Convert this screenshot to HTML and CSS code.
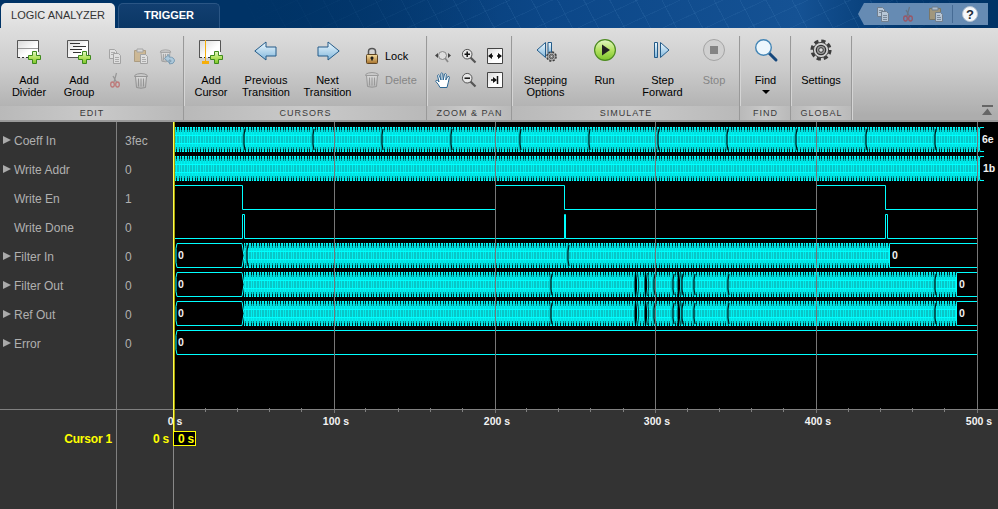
FILE: index.html
```html
<!DOCTYPE html>
<html lang="en">
<head>
    <meta charset="UTF-8">
    <title>Logic Analyzer</title>
    <link rel="stylesheet" href="styles.css">
</head>
<body>
    <svg class="defs" width="0" height="0">
        <defs>
            <linearGradient id="paper" x2="1" y2="1"><stop stop-color="#d8d8d8"/><stop offset=".6" stop-color="#fff"/></linearGradient>
            <linearGradient id="blue" x2="0" y2="1"><stop stop-color="#f0faff"/><stop offset="1" stop-color="#7fb6dc"/></linearGradient>
            <linearGradient id="green" x2="0" y2="1"><stop stop-color="#e4f7c8"/><stop offset=".5" stop-color="#b4e261"/><stop offset="1" stop-color="#7cc52a"/></linearGradient>
            <linearGradient id="gold" x2="0" y2="1"><stop stop-color="#f7dfa0"/><stop offset="1" stop-color="#a7722c"/></linearGradient>
            <linearGradient id="grey" x2="0" y2="1"><stop stop-color="#eee"/><stop offset="1" stop-color="#aaa"/></linearGradient>
            <symbol id="plus" viewBox="0 0 13 13"><path d="M4.5.5h4v4h4v4h-4v4h-4v-4h-4v-4h4z" fill="url(#green)" stroke="#3f8a1c"/></symbol>
            <symbol id="copy" viewBox="0 0 16 16">
                <path d="M2.500 1.500h5l2 2v7h-7z" fill="#eee" stroke="#777"/><path d="M4 4.500h4M4 6.500h4" stroke="#888"/>
                <path d="M6.500 5.500h5l2 2v8h-7z" fill="#eee" stroke="#777"/><path d="M8 9.500h4M8 11.500h4M8 13.500h4" stroke="#888"/>
            </symbol>
            <symbol id="cut" viewBox="0 0 16 16">
                <path d="M9.500 1L7 10M6 4l4 7" stroke="#666" fill="none" stroke-width="1.200"/>
                <ellipse cx="5.500" cy="12.500" rx="1.800" ry="2.500" fill="none" stroke="#b33" stroke-width="1.300"/><ellipse cx="10.500" cy="12.500" rx="1.800" ry="2.500" fill="none" stroke="#b33" stroke-width="1.300"/>
            </symbol>
            <symbol id="paste" viewBox="0 0 16 16">
                <path d="M1.500 2.500h11v11h-11z" fill="#c9a05a" stroke="#8a6a35"/><path d="M4 1h6v3H4z" fill="#ddd" stroke="#777"/>
                <path d="M7.500 6.500h5l2 2v7h-7z" fill="#eee" stroke="#777"/><path d="M9 9.500h3M9 11.500h4M9 13.500h4" stroke="#888"/>
            </symbol>
            <symbol id="trash" viewBox="0 0 16 17">
                <path d="M2.500 4.500h11l-1 11q-4.500 1.500-9 0z" fill="url(#grey)" stroke="#666"/>
                <path d="M1.500 4.500q0-2 3-2.500 3.500-1 7 0 3 .5 3 2.500z" fill="#ccc" stroke="#666"/>
                <path d="M5.500 6.500v8M8 6.500v8M10.500 6.500v8" stroke="#666"/>
            </symbol>
            <symbol id="arrow" viewBox="0 0 23 20"><path d="M.8 10L12 1v5h10v9H12v4z" fill="url(#blue)" stroke="#245b88"/></symbol>
            <symbol id="lens" viewBox="0 0 16 16"><path d="M9.500 9.500l5 5" stroke="#555" stroke-width="2.200"/><circle cx="6.200" cy="6.200" r="4.800" fill="#e8e8e8" stroke="#555"/></symbol>
            <symbol id="gear" viewBox="0 0 22 22">
                <circle cx="11" cy="11" r="9" fill="none" stroke="#3c3c3c" stroke-width="3.200" stroke-dasharray="4.200 2.869"/>
                <circle cx="11" cy="11" r="7.600" fill="#d0d0d0" stroke="#444"/><circle cx="11" cy="11" r="4.700" fill="#999" stroke="#333" stroke-width="1.300"/>
                <circle cx="11" cy="11" r="2.300" fill="#ddd" stroke="#333"/>
            </symbol>
            <!-- three transitions every 8px -->
            <pattern id="bus" width="8" height="29" patternUnits="userSpaceOnUse" x="174" y="127">
                <g shape-rendering="crispEdges">
                    <rect width="8" height="25" fill="#00e2e2"/>
                    <rect y="9" width="8" height="7" fill="#08c6c8"/>
                    <path d="M2 3h1v19h-1zM5 3h1v19h-1zM7 3h1v19h-1z" fill="#00f0f0"/>
                    <path d="M0 0h8v1H0zM0 8h8v1H0zM0 16h8v1H0zM0 24h8v1H0z" fill="#00ffff"/>
                    <path d="M2 0h1v3h-1zM5 0h1v3h-1zM7 0h1v3h-1zM2 22h1v3h-1zM5 22h1v3h-1zM7 22h1v3h-1z" fill="#002a2a"/>
                    <path d="M2 3h1v2h-1zM5 3h1v2h-1zM7 3h1v2h-1zM2 20h1v2h-1zM5 20h1v2h-1zM7 20h1v2h-1z" fill="#008a8a"/>
                </g>
            </pattern>
            <symbol id="gap" viewBox="0 0 5 25" overflow="visible"><path d="M2 1L1 8v9l1 7" fill="none" stroke="#0aa"/><path d="M3 2L2 8v9l1 6" fill="none" stroke="#001818" stroke-width="1.200"/></symbol>
            <symbol id="wide" viewBox="0 0 5 25" overflow="visible"><path d="M1 0h1l1 8v9l-1 8H1l-.5-8V8z" fill="#000"/><path d="M3.500 1l1 7v9l-1 7" fill="none" stroke="#055"/></symbol>
        </defs>
    </svg>

    <header class="topbar">
        <div class="tab active">LOGIC ANALYZER</div>
        <div class="tab">TRIGGER</div>
        <svg class="quick" width="140" height="22" viewBox="0 0 140 22">
            <path d="M0 11L6 0h124v22H6z" fill="#668bb3"/>
            <g opacity=".6"><use href="#copy" x="17" y="3" width="16" height="16"/><use href="#cut" x="42" y="3" width="16" height="16"/><use href="#paste" x="70" y="3" width="16" height="16"/></g>
            <path d="M94.500 2v18" stroke="#466b94"/>
            <circle cx="112" cy="11" r="7.500" fill="#f6f8fa" stroke="#b5c2d0"/>
            <text x="112" y="15.500" class="help">?</text>
        </svg>
    </header>

    <nav class="ribbon">
        <section class="group edit">
            <div class="tools">
                <button class="tool"><svg width="26" height="26"><path d="M1.500 2.500h21v17h-21z" fill="url(#paper)"/><path d="M1.500 20V2.500h21V14" fill="none" stroke="#555"/><path d="M2 10.500h20" stroke="#999"/><path d="M2 19.500h12" stroke="#333" stroke-dasharray="2 2"/><use href="#plus" x="12" y="13" width="13" height="13"/></svg><span>Add<br>Divider</span></button>
                <button class="tool"><svg width="26" height="26"><path d="M1.500 2.500h21v17h-21z" fill="url(#paper)" stroke="#555"/><path d="M4 5.500h10M7 8.500h13M4 11.500h12M7 14.500h8" stroke="#333"/><use href="#plus" x="12" y="13" width="13" height="13"/></svg><span>Add<br>Group</span></button>
                <div class="icons three faded">
                    <svg width="16" height="17"><use href="#copy" width="16" height="16"/></svg>
                    <svg width="16" height="17"><use href="#paste" width="16" height="16"/></svg>
                    <svg width="16" height="17"><use href="#trash" width="13" height="15"/><path d="M5.500 10.500l4.500-4v2.500q5.500 0 5.500 4-.5 3-5 3v-2q2.500-.5 1.500-1.500-1-.7-2-.5v2.500z" fill="#8cc4e8" stroke="#2a6b98"/></svg>
                    <svg width="16" height="17"><use href="#cut" width="16" height="16"/></svg>
                    <svg width="16" height="17"><use href="#trash" width="16" height="17"/></svg>
                </div>
            </div>
            <h2>EDIT</h2>
        </section>
        <section class="group cursors">
            <div class="tools">
                <button class="tool w54"><svg width="26" height="26"><path d="M1.500 2.500h21v17h-21z" fill="url(#paper)"/><path d="M1.500 20V2.500h21V14" fill="none" stroke="#555"/><path d="M2 19.500h12" stroke="#333" stroke-dasharray="2 2"/><path d="M7.500 2v21" stroke="#f5ae0a"/><path d="M4 23h7v3H4z" fill="#f5ae0a"/><use href="#plus" x="12" y="13" width="13" height="13"/></svg><span>Add<br>Cursor</span></button>
                <button class="tool w56"><svg width="26" height="26"><use href="#arrow" x="1" y="3" width="23" height="20"/></svg><span>Previous<br>Transition</span></button>
                <button class="tool w67"><svg width="26" height="26"><use href="#arrow" width="23" height="20" transform="translate(25 3) scale(-1 1)"/></svg><span>Next<br>Transition</span></button>
                <div class="lines">
                    <div><svg width="16" height="17"><path d="M4.500 9V4.500q0-3 3.500-3t3.500 3V9" fill="none" stroke="#555" stroke-width="1.500"/><rect x="2.500" y="7.500" width="11" height="9" rx="1" fill="url(#gold)" stroke="#5e4422"/><path d="M8 9.500v4M6.500 11h3" stroke="#111" stroke-width="1.500"/></svg>Lock</div>
                    <div class="off"><svg width="16" height="17"><use href="#trash" width="16" height="17"/></svg>Delete</div>
                </div>
            </div>
            <h2>CURSORS</h2>
        </section>
        <section class="group zoom">
            <div class="tools">
                <div class="icons zoomicons">
                    <svg width="16" height="17"><circle cx="7.500" cy="7.500" r="4" fill="#ddd" stroke="#888"/><path d="M10 10l3 4" stroke="#888" stroke-width="1.700"/><path d="M3 5v5L0 7.500zM13 5v5l3-2.500z" fill="#444"/></svg>
                    <svg width="16" height="17"><use href="#lens" width="16" height="16"/><path d="M3.500 6.200h5.500M6.200 3.500V9" stroke="#111" stroke-width="1.500"/></svg>
                    <svg width="17" height="17"><path d="M.5.5h15v15H.5z" fill="url(#paper)" stroke="#444"/><path d="M2 8h4M10 8h4" stroke="#111" stroke-width="1.500"/><path d="M5 5v6L1 8zM11 5v6l4-3z" fill="#111"/></svg>
                    <svg width="16" height="17"><path d="M5 15.500Q3.500 12 .8 9.500q0-1.500 1.500-1.200L4 10 2.500 3.500q.8-1.500 1.800 0L6 8 5.800 1.500q1-1.300 1.900 0L8.200 8l1.300-6q1.300-1 1.800.3L10.800 8l2-3.500q1.500-.6 1.600.7Q13.500 10 12 15.500z" fill="#fff" stroke="#2d6793"/></svg>
                    <svg width="16" height="17"><use href="#lens" width="16" height="16"/><path d="M3.500 6.200h5.500" stroke="#111" stroke-width="1.500"/></svg>
                    <svg width="17" height="17"><path d="M.5.5h15v15H.5z" fill="url(#paper)" stroke="#444"/><path d="M4 8h3M10.500 4v8" stroke="#111" stroke-width="1.500"/><path d="M6 5v6l4-3z" fill="#111"/></svg>
                </div>
            </div>
            <h2>ZOOM &amp; PAN</h2>
        </section>
        <section class="group simulate">
            <div class="tools">
                <button class="tool w67"><svg width="26" height="26"><path d="M12.500 4.500v15L4 12z" fill="url(#blue)" stroke="#245b88"/><path d="M15 4.500h3.500v12H15z" fill="url(#blue)" stroke="#245b88"/><use href="#gear" x="13" y="13" width="11" height="11"/></svg><span>Stepping<br>Options</span></button>
                <button class="tool w51"><svg width="26" height="26"><circle cx="13" cy="12" r="10.400" fill="url(#green)" stroke="#4c8a20" stroke-width="1.200"/><path d="M10 6.500v11l8-5.500z" fill="#222"/></svg><span>Run</span></button>
                <button class="tool w65"><svg width="26" height="26"><path d="M4.500 4.500h3v15h-3zM10.500 4.500v15L19 12z" fill="url(#blue)" stroke="#245b88"/></svg><span>Step<br>Forward</span></button>
                <button class="tool w38 off"><svg width="26" height="26"><circle cx="13" cy="12" r="10.500" fill="#d0d0d0" stroke="#a4a4a4"/><path d="M9 8h8v8H9z" fill="#848484"/></svg><span>Stop</span></button>
            </div>
            <h2>SIMULATE</h2>
        </section>
        <section class="group find">
            <div class="tools">
                <button class="tool"><svg width="26" height="26"><path d="M16 15l7 7" stroke="#15477c" stroke-width="3" stroke-linecap="round"/><circle cx="10.500" cy="9.500" r="7.800" fill="#ecf6fc" stroke="#4385b5" stroke-width="1.400"/></svg><span>Find<i class="caret"></i></span></button>
            </div>
            <h2>FIND</h2>
        </section>
        <section class="group global">
            <div class="tools">
                <button class="tool"><svg width="26" height="26"><use href="#gear" x="2" y="1" width="22" height="22"/></svg><span>Settings</span></button>
            </div>
            <h2>GLOBAL</h2>
        </section>
        <svg class="collapse" width="12" height="12"><path d="M1 0h11v2H1zM6.500 3.500l4.500 6.500H1z" fill="#666"/></svg>
    </nav>

    <main class="viewer">
        <div class="names">
            <ul>
                <li class="bus">Coeff In</li>
                <li class="bus">Write Addr</li>
                <li>Write En</li>
                <li>Write Done</li>
                <li class="bus">Filter In</li>
                <li class="bus">Filter Out</li>
                <li class="bus">Ref Out</li>
                <li class="bus">Error</li>
            </ul>
            <div class="cursor-row">Cursor 1</div>
        </div>
        <div class="values">
            <ul>
                <li>3fec</li>
                <li>0</li>
                <li>1</li>
                <li>0</li>
                <li>0</li>
                <li>0</li>
                <li>0</li>
                <li>0</li>
            </ul>
            <div class="cursor-row">0 s</div>
        </div>
        <svg class="plot" width="824" height="387" viewBox="174 122 824 387">
            <rect x="174" y="122" width="824" height="287" fill="#000"/>
            <g id="buses" fill="url(#bus)">
                <rect x="174" y="127" width="806" height="25"/>
                <rect x="174" y="156" width="806" height="25"/>
                <rect x="244" y="243" width="645" height="25"/>
                <rect x="244" y="272" width="712" height="25"/>
                <rect x="244" y="301" width="712" height="25"/>
            </g>
            <g id="gaps"></g>
            <g class="wave">
                <path d="M174 185.500H242.500V209.500H495.500V185.500H564.500V209.500H816.500V185.500H885.500V209.500H978"/>
                <path d="M174 238.500H242.500V214.500H244.500V238.500H564.500V214.500H565.500V238.500H885.500V214.500H887.500V238.500H978"/>
                <path d="M177 243.500H242l2 12-2 12H177l-1-5v-14z"/>
                <path d="M177 272.500H242l2 12-2 12H177l-1-5v-14z"/>
                <path d="M177 301.500H242l2 12-2 12H177l-1-5v-14z"/>
                <path d="M978 330.500H177l-1 5v14l1 5H978"/>
                <path d="M978 243.500H889.500V267.500H978M978 272.500H956.500V296.500H978M978 301.500H956.500V325.500H978"/>
                <path d="M984 127.500h-4l-1 5v14l1 5h4M984 156.500h-4l-1 5v14l1 5h4"/>
            </g>
            <path class="grid" d="M334.500 122V413M495.500 122V413M655.500 122V413M816.500 122V413M977.500 122V413"/>
            <path id="ticks" class="axis" d="M174 409.500H998"/>
            <g class="small">
                <text x="982" y="143">6e</text><text x="983" y="172">1b</text>
                <text x="178" y="259">0</text><text x="178" y="288">0</text><text x="178" y="317">0</text><text x="178" y="346">0</text>
                <text x="892" y="259">0</text><text x="959" y="288">0</text><text x="959" y="317">0</text>
            </g>
            <g class="small mid">
                <text x="175" y="425">0 s</text><text x="336" y="425">100 s</text><text x="497" y="425">200 s</text>
                <text x="657" y="425">300 s</text><text x="818" y="425">400 s</text><text x="979" y="425">500 s</text>
            </g>
            <path d="M173.500 446V509" stroke="#888"/>
            <path d="M173.500 122V431" stroke="#ffff50"/><path d="M174.500 122V431" stroke="#a8a000"/>
            <rect x="173.500" y="431.500" width="22" height="14" fill="#000" stroke="#ff0"/>
            <text class="cursor-text" x="178" y="443">0 s</text>
        </svg>
    </main>
    <script>
        const gaps = document.getElementById('gaps');
        const out = [551, 654, 673, 682, 694, 728, 935];
        const outWide = [636, 646, 679];
        function add(type, list, y) {
            list.forEach(x => {
                gaps.innerHTML += `<use href="#${type}" x="${x - 2}" y="${y}" width="5" height="25"/>`;
            });
        }
        add('gap', [244, 313, 382, 451, 520, 589, 658, 727, 796, 866, 935], 127);
        add('gap', [247, 568], 243);
        [272, 301].forEach(y => {
            add('gap', out, y);
            add('wide', outWide, y);
        });

        // minor ticks, five to a division
        let d = 'M174 409.5H998';
        for (let i = 1; i < 25; i++) {
            if (i % 5) d += `M${Math.floor(173 + i * 32.15) + 0.5} 408v4`;
        }
        document.getElementById('ticks').setAttribute('d', d);
    </script>
</body>
</html>
```

FILE: styles.css
```css
body {
    margin: 0;
    width: 998px;
    height: 509px;
    overflow: hidden;
    background: #333;
    font-family: "Liberation Sans", Arial, sans-serif;
    font-size: 11px;
    color: #000;
}
svg {
    display: block;
    flex: none;
}
.defs {
    position: absolute;
}
.topbar {
    display: flex;
    height: 28px;
    padding: 3px 0 0 1px;
    box-sizing: border-box;
    background:
        linear-gradient(90deg, #003366 24%, transparent 50%, transparent 88%, #003366),
        repeating-linear-gradient(62deg, transparent 0 22px, rgba(120, 180, 230, 0.09) 22px 23px),
        repeating-linear-gradient(155deg, transparent 0 17px, rgba(120, 180, 230, 0.07) 17px 18px),
        linear-gradient(90deg, #003366 0%, #003366 25%, #0c4788 55%, #155294 80%, #043a72 90%, #003366 100%);
}
.tab {
    width: 102px;
    height: 25px;
    line-height: 23px;
    text-align: center;
    box-sizing: border-box;
    margin-left: 3px;
    border: 1px solid #2b5685;
    border-bottom: 0;
    border-radius: 5px 5px 0 0;
    background: linear-gradient(#123f71, #0b3765);
    color: #fff;
    font-weight: bold;
}
.tab.active {
    width: 114px;
    line-height: 25px;
    margin-left: 0;
    border: 0;
    background: linear-gradient(#ececec, #dedede);
    color: #333;
    font-weight: normal;
}
.quick {
    margin-left: auto;
}
.help {
    font-size: 13px;
    font-weight: bold;
    text-anchor: middle;
    fill: #222b38;
}
.ribbon {
    display: flex;
    height: 94px;
    box-sizing: border-box;
    border-bottom: 2px solid #999;
    background: linear-gradient(#dedede, #cbcbcb 45%, #adadad 95%);
}
.group {
    position: relative;
    display: flex;
    flex-direction: column;
    box-sizing: border-box;
}
.group::after {
    content: "";
    position: absolute;
    right: -1px;
    top: 8px;
    bottom: 0;
    width: 1px;
    background: #999;
    border-right: 1px solid #d5d5d5;
}
.edit { width: 184px; }
.cursors { width: 243px; }
.zoom { width: 85px; }
.simulate { width: 228px; }
.find { width: 51px; }
.global { width: 61px; }
.group h2 {
    margin: 0;
    height: 14px;
    line-height: 14px;
    font-size: 9px;
    font-weight: normal;
    letter-spacing: 1px;
    text-align: center;
    color: #3a3a3a;
    background: linear-gradient(90deg, #b9b9b9, #c9c9c9 50%, #b9b9b9);
}
.tools {
    display: flex;
    height: 78px;
}
.edit .tools {
    padding-left: 4px;
}
.tool {
    display: flex;
    flex-direction: column;
    align-items: center;
    flex: none;
    width: 50px;
    padding: 10px 0 0;
    border: 0;
    background: none;
    font: inherit;
    color: #000;
    line-height: 12px;
}
.tool span {
    margin-top: 10px;
}
.w38 { width: 38px; }
.w51 { width: 51px; }
.w54 { width: 54px; }
.w56 { width: 56px; }
.w65 { width: 65px; }
.w67 { width: 67px; }
.find .tool { width: 51px; }
.global .tool { width: 60px; }
.tool.off, .off {
    color: #858585;
}
.icons {
    display: grid;
    align-content: start;
    row-gap: 7px;
}
.three {
    grid-template-columns: repeat(3, 26px);
    padding: 20px 0 0 3px;
}
.faded {
    opacity: 0.5;
}
.zoomicons {
    grid-template-columns: repeat(3, 26px);
    padding: 20px 0 0 8px;
}
.lines {
    padding: 19px 0 0 3px;
}
.lines div {
    display: flex;
    align-items: center;
    height: 17px;
    gap: 5px;
    margin-bottom: 7px;
}
.lines .off svg {
    opacity: 0.45;
}
.caret {
    display: block;
    width: 0;
    margin: 4px auto 0;
    border: 4px solid transparent;
    border-top-color: #000;
    border-bottom: 0;
}
.collapse {
    margin: 77px 5px 0 auto;
}
.viewer {
    display: flex;
    height: 387px;
    color: #b0b0b0;
    font-size: 12px;
    background: #333;
}
.names, .values {
    box-sizing: border-box;
    border-right: 1px solid #808080;
}
.names {
    width: 117px;
}
.values {
    width: 57px;
}
.viewer ul {
    list-style: none;
    margin: 0;
    padding: 4px 0 0;
    height: 288px;
    box-sizing: border-box;
    border-bottom: 1px solid #808080;
}
.viewer li {
    height: 29px;
    line-height: 30px;
    padding-left: 14px;
}
.values li {
    padding-left: 8px;
}
.viewer li.bus {
    display: flex;
    padding-left: 3px;
}
.bus::before {
    content: "";
    margin: 10px 3px 0 0;
    height: 0;
    border: 4.5px solid transparent;
    border-left: 8px solid #aaa;
    border-right: 0;
}
.cursor-row {
    margin-top: 20px;
    padding-right: 4px;
    line-height: 18px;
    text-align: right;
    font-size: 12px;
    letter-spacing: -0.2px;
    font-weight: bold;
    color: #ff0;
}
.plot {
    overflow: visible;
}
.wave path {
    fill: none;
    stroke: #00ffff;
}
.grid {
    stroke: #777;
    fill: none;
}
.axis {
    stroke: #808080;
    fill: none;
}
.small {
    font-size: 10.5px;
    font-weight: bold;
    fill: #f2f2f2;
}
.mid {
    text-anchor: middle;
}
.cursor-text {
    font-size: 12px;
    letter-spacing: -0.2px;
    font-weight: bold;
    fill: #ff0;
}
```
